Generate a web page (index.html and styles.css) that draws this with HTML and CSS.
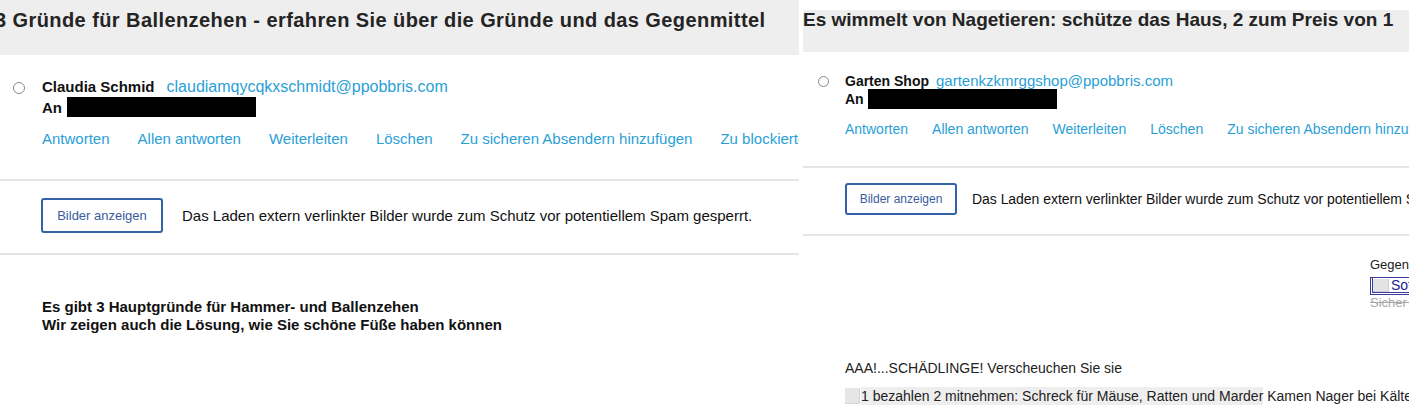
FILE: index.html
```html
<!DOCTYPE html>
<html lang="de">
<head>
    <meta charset="utf-8">
    <title>Posteingang</title>
    <link rel="stylesheet" href="styles.css">
</head>
<body>
<div class="mails">
    <div class="mail mail-left">
        <div class="subject">3 Gründe für Ballenzehen - erfahren Sie über die Gründe und das Gegenmittel</div>
        <div class="sender">
            <span class="radio"></span>
            <div class="sender-info">
                <div class="from"><b>Claudia Schmid</b><a class="email">claudiamqycqkxschmidt@ppobbris.com</a></div>
                <div class="to">An <span class="redacted"></span></div>
            </div>
        </div>
        <div class="actions">
            <a>Antworten</a>
            <a>Allen antworten</a>
            <a>Weiterleiten</a>
            <a>Löschen</a>
            <a>Zu sicheren Absendern hinzufügen</a>
            <a>Zu blockierten Absendern hinzufügen</a>
        </div>
        <div class="images">
            <button>Bilder anzeigen</button>
            <span>Das Laden extern verlinkter Bilder wurde zum Schutz vor potentiellem Spam gesperrt.</span>
        </div>
        <div class="content">
            Es gibt 3 Hauptgründe für Hammer- und Ballenzehen<br>
            Wir zeigen auch die Lösung, wie Sie schöne Füße haben können
        </div>
    </div>

    <div class="mail mail-right">
        <div class="subject">Es wimmelt von Nagetieren: schütze das Haus, 2 zum Preis von 1</div>
        <div class="sender">
            <span class="radio"></span>
            <div class="sender-info">
                <div class="from"><b>Garten Shop</b><a class="email">gartenkzkmrggshop@ppobbris.com</a></div>
                <div class="to">An <span class="redacted"></span></div>
            </div>
        </div>
        <div class="actions">
            <a>Antworten</a>
            <a>Allen antworten</a>
            <a>Weiterleiten</a>
            <a>Löschen</a>
            <a>Zu sicheren Absendern hinzufügen</a>
            <a>Zu blockierten Absendern hinzufügen</a>
        </div>
        <div class="images">
            <button>Bilder anzeigen</button>
            <span>Das Laden extern verlinkter Bilder wurde zum Schutz vor potentiellem Spam gesperrt.</span>
        </div>
        <div class="content">
            <div class="promo">
                <div>Gegenmittel</div>
                <div class="promo-box"><span class="placeholder"></span>Sofort bestellen</div>
                <div class="crossed">Sicher bezahlen</div>
            </div>
            <div class="alarm">AAA!...SCHÄDLINGE! Verscheuchen Sie sie</div>
            <div class="offer">
                <span class="placeholder"></span>
                <span class="highlight">1 bezahlen 2 mitnehmen: Schreck für Mäuse, Ratten und Marder</span>&nbsp;Kamen Nager bei Kälte ins Haus
            </div>
        </div>
    </div>
</div>
</body>
</html>
```

FILE: styles.css
```css
body {
    margin: 0;
    font-family: "Liberation Sans", Arial, sans-serif;
    color: #222;
    background: #fff;
}

.mails {
    display: flex;
    gap: 4px;
    height: 417px;
    overflow: hidden;
}

.mail {
    overflow: hidden;
    white-space: nowrap;
}

.mail-left {
    flex: none;
    width: 799px;
}

.mail-right {
    flex: 1;
    min-width: 0;
}

/* subject bar */
.subject {
    box-sizing: border-box;
    height: 55px;
    padding-top: 8px;
    background: #eeeeee;
    color: #242424;
    font-size: 20px;
    line-height: 24px;
    font-weight: bold;
    letter-spacing: 0.42px;
    text-indent: -5px;
}

.mail-right .subject {
    height: 42px;
    margin-top: 10px;
    padding-top: 0;
    font-size: 19px;
    line-height: 20px;
    letter-spacing: 0;
    text-indent: 0;
}

/* sender block */
.sender {
    display: flex;
    margin-top: 22px;
    padding-left: 13px;
}

.radio {
    flex: none;
    box-sizing: border-box;
    width: 12px;
    height: 12px;
    margin-top: 5px;
    margin-right: 17px;
    border: 1px solid #8a8a8a;
    border-radius: 50%;
}

.from {
    font-size: 15px;
    line-height: 20px;
    color: #111;
}

.email {
    margin-left: 12px;
    font-size: 16px;
    color: #2a9fd6;
}

.to {
    display: flex;
    align-items: center;
    height: 20px;
    font-size: 15px;
    font-weight: bold;
    color: #111;
}

.redacted {
    width: 189px;
    height: 20px;
    margin-left: 5px;
    background: #000;
}

.mail-right .sender {
    margin-top: 21px;
    padding-left: 15px;
}

.mail-right .radio {
    width: 11px;
    height: 11px;
    margin-top: 3px;
    margin-right: 16px;
}

.mail-right .from {
    font-size: 14px;
    line-height: 16px;
}

.mail-right .email {
    margin-left: 7px;
    font-size: 15px;
}

.mail-right .to {
    font-size: 14px;
}

.mail-right .redacted {
    margin-left: 4px;
}

/* action links */
.actions {
    display: flex;
    gap: 28px;
    margin-top: 12px;
    padding-left: 42px;
    font-size: 15px;
    line-height: 20px;
    color: #2a9fd6;
}

.mail-right .actions {
    gap: 24px;
    margin-top: 11px;
    font-size: 14px;
    line-height: 18px;
}

/* blocked images notice */
.images {
    display: flex;
    align-items: center;
    gap: 19px;
    margin-top: 30px;
    padding: 17px 0 20px 41px;
    border-top: 2px solid #e5e5e5;
    border-bottom: 2px solid #e5e5e5;
    font-size: 15px;
    color: #111;
}

.images button {
    flex: none;
    width: 122px;
    height: 35px;
    padding: 0;
    border: 2px solid #3462a8;
    border-radius: 3px;
    background: #fff;
    color: #3a5c9c;
    font-family: "Liberation Sans", Arial, sans-serif;
    font-size: 13px;
}

.mail-right .images {
    gap: 15px;
    margin-top: 28px;
    padding: 15px 0 19px 42px;
    font-size: 14px;
    letter-spacing: -0.04px;
}

.mail-right .images button {
    width: 112px;
    height: 32px;
    font-size: 12px;
}

/* message body */
.content {
    margin-top: 43px;
    padding-left: 42px;
    font-size: 15px;
    line-height: 18px;
    font-weight: bold;
    color: #111;
}

.mail-right .content {
    margin-top: 21px;
    font-size: 14px;
    font-weight: normal;
    color: #222;
}

.promo {
    margin-left: 525px;
    font-size: 13px;
    line-height: 16px;
    color: #222;
}

.promo-box {
    display: flex;
    align-items: center;
    box-sizing: border-box;
    height: 18px;
    margin-top: 4px;
    border-top: 1px solid #3a3a9c;
    border-left: 3px double #3a3a9c;
    border-bottom: 3px double #3a3a9c;
    color: #23238f;
    font-size: 14px;
}

.promo-box .placeholder {
    flex: none;
    width: 16px;
    height: 13px;
    margin-right: 2px;
    background: #e3e3e3;
    box-shadow: inset -1px -1px 0 #cfcfcf;
}

.crossed {
    color: #a8a8a8;
    text-decoration: line-through;
}

.alarm {
    margin-top: 48px;
    line-height: 18px;
}

.offer {
    display: flex;
    align-items: center;
    height: 17px;
    margin-top: 10px;
}

.offer .placeholder {
    flex: none;
    width: 15px;
    height: 16px;
    margin-right: 1px;
    background: #e6e6e6;
    box-shadow: inset -1px -1px 0 #d4d4d4;
}

.highlight {
    background: #eeeeee;
}
```
